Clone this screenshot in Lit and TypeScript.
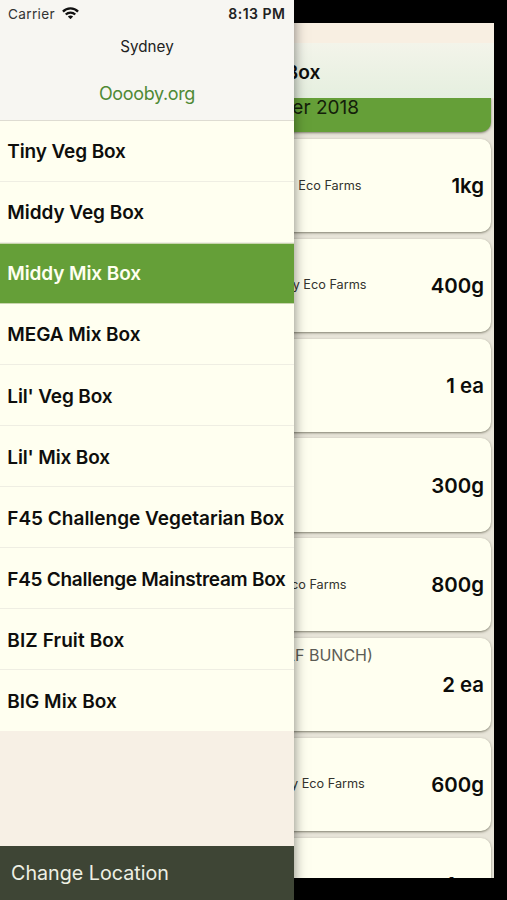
import { LitElement, html, css, nothing } from "lit";
import { customElement, property } from "lit/decorators.js";
import { classMap } from "lit/directives/class-map.js";
import { styleMap } from "lit/directives/style-map.js";

interface BoxItem {
  qty: string;
  farm?: string;
  note?: string;
  /* distance from the card's left edge to the end of the caption */
  end?: number;
}

const BOXES = [
  { name: "Tiny Veg Box", track: -0.12 },
  { name: "Middy Veg Box", track: -0.06 },
  { name: "Middy Mix Box", track: -0.1 },
  { name: "MEGA Mix Box", track: -0.07 },
  { name: "Lil' Veg Box", track: -0.14 },
  { name: "Lil' Mix Box", track: -0.14 },
  { name: "F45 Challenge Vegetarian Box", track: 0 },
  { name: "F45 Challenge Mainstream Box", track: -0.27 },
  { name: "BIZ Fruit Box", track: 0.1 },
  { name: "BIG Mix Box", track: 0 },
];

const ITEMS: BoxItem[] = [
  { qty: "1kg", farm: "Eco Farms", end: 361.5 },
  { qty: "400g", farm: "y Eco Farms", end: 366.5 },
  { qty: "1 ea" },
  { qty: "300g" },
  { qty: "800g", farm: "co Farms", end: 346.5 },
  { qty: "2 ea", note: "LF BUNCH)", end: 372.8 },
  { qty: "600g", farm: "y Eco Farms", end: 364.8 },
  { qty: "1 ea" },
];

@customElement("item-card")
export class ItemCard extends LitElement {
  @property({ attribute: false }) item!: BoxItem;

  static styles = css`
    :host {
      display: block;
      flex: none;
      height: 93.3px;
      margin-bottom: 6.5px;
    }
    .card {
      display: grid;
      grid-template-columns: 1fr auto;
      align-items: center;
      height: 100%;
      box-sizing: border-box;
      padding-right: 7px;
      background: #fffff0;
      border-radius: 0 10px 10px 0;
      box-shadow: 0 1px 2.5px rgba(60, 60, 40, 0.6);
    }
    .caption {
      display: flex;
      justify-content: flex-end;
      white-space: pre;
      font-size: 12.7px;
      line-height: 16px;
      color: #33332e;
    }
    .note {
      align-self: start;
      font-size: 16px;
      line-height: 20px;
      padding-top: 7px;
      color: #5c5c55;
    }
    .qty {
      grid-column: 2;
      margin-top: 1px;
      font-size: 20.4px;
      font-weight: 600;
      line-height: 26px;
      color: #0c0c0a;
    }
  `;

  render() {
    const { qty, farm, note, end } = this.item;
    return html`<div class="card">
      ${farm || note
        ? html`<div
            class=${classMap({ caption: true, note: !!note })}
            style=${styleMap({ width: `${end}px` })}
          ><span>${farm ?? note}</span></div>`
        : nothing}
      <div class="qty">${qty}</div>
    </div>`;
  }
}

@customElement("side-menu")
export class SideMenu extends LitElement {
  static styles = css`
    :host {
      display: flex;
      flex-direction: column;
      background: #f7f0e5;
    }
    .head {
      display: flex;
      flex-direction: column;
      align-items: center;
      height: 119.6px;
      background: #f7f6f2;
      border-bottom: 1px solid #dedcd2;
      box-sizing: content-box;
    }
    .status {
      display: flex;
      align-items: center;
      align-self: stretch;
      height: 27px;
      padding: 0 9px 0 8px;
      font-size: 13.6px;
      color: #333;
    }
    .carrier {
      letter-spacing: 0.35px;
    }
    .wifi {
      width: 17px;
      height: 12.3px;
      margin-left: 7px;
      margin-top: -1px;
    }
    .time {
      margin-left: auto;
      font-weight: 600;
      font-size: 14px;
      letter-spacing: 0.5px;
      margin-right: -0.5px;
      color: #222;
    }
    .city {
      margin-top: 10px;
      font-size: 15.2px;
      line-height: 20px;
      color: #222;
    }
    .site {
      margin-top: 25px;
      font-size: 18px;
      letter-spacing: -0.35px;
      line-height: 24px;
      color: #4f8a35;
    }
    .row {
      display: flex;
      align-items: center;
      height: 61.1px;
      box-sizing: border-box;
      padding: 2px 0 0 7.3px;
      background: #fffff0;
      border-bottom: 1px solid #efeee3;
      font-size: 19px;
      font-weight: 600;
      white-space: nowrap;
      color: #0e0e0c;
    }
    .row:last-child {
      border-bottom-color: #f7f0e5;
    }
    .row.active {
      background: #659f38;
      color: #fffff0;
      border-top: 1px solid #c9d5ae;
      padding-top: 1px;
      border-bottom-color: #c9d5ae;
    }
    .foot {
      display: flex;
      align-items: center;
      height: 54px;
      margin-top: auto;
      padding-left: 11px;
      background: #3e4535;
      font-size: 19.7px;
      color: #eef0e4;
    }
  `;

  render() {
    return html`
      <div class="head">
        <div class="status">
          <span class="carrier">Carrier</span>
          <svg class="wifi" viewBox="0 0 18 13">
            <g fill="none" stroke="#111" stroke-width="2.4">
              <path d="M1 4.9 C5.2 0.3 12.8 0.3 17 4.9" />
              <path d="M4 8 C6.7 5.1 11.3 5.1 14 8" />
            </g>
            <path d="M6.2 10.1 C7.8 8.6 10.2 8.6 11.8 10.1 L9 12.9 Z" fill="#111" />
          </svg>
          <span class="time">8:13 PM</span>
        </div>
        <div class="city">Sydney</div>
        <div class="site">Ooooby.org</div>
      </div>
      <div class="list">
        ${BOXES.map(
          (b) => html`<div class=${classMap({ row: true, active: b.name === "Middy Mix Box" })}>
            <span style=${styleMap({ letterSpacing: `${b.track}px` })}>${b.name}</span>
          </div>`
        )}
      </div>
      <div class="foot">Change Location</div>
    `;
  }
}

@customElement("app-root")
export class AppRoot extends LitElement {
  static styles = css`
    :host {
      display: block;
      position: relative;
      width: 507px;
      height: 900px;
      overflow: hidden;
      box-sizing: border-box;
      padding: 23px 13px 22px 0;
      background: #000;
      font-family: Inter, "Liberation Sans", sans-serif;
    }
    .page {
      display: flex;
      flex-direction: column;
      height: 855px;
      overflow: hidden;
      background: #e8e5d9;
    }
    .top {
      flex: none;
      height: 20px;
      background: #f8efe2;
    }
    .nav {
      flex: none;
      display: flex;
      align-items: center;
      height: 55px;
      box-sizing: border-box;
      padding: 3px 0 0 285.5px;
      background: linear-gradient(#f3f4ea, #e5efdf);
      font-size: 19.2px;
      font-weight: 600;
      color: #0e0e0c;
    }
    .cards {
      flex: 1;
      min-height: 0;
      overflow: hidden;
      padding-right: 3px;
      display: flex;
      flex-direction: column;
    }
    .date {
      flex: none;
      display: flex;
      align-items: flex-start;
      justify-content: flex-end;
      height: 34px;
      margin-bottom: 7px;
      box-sizing: border-box;
      padding-right: 132px;
      background: #659f38;
      border-radius: 0 0 10px 0;
      box-shadow: 0 1px 2.5px rgba(60, 60, 40, 0.6);
      font-size: 19px;
      line-height: 19px;
      color: #14200a;
    }
    .menu {
      position: absolute;
      left: 0;
      top: 0;
      bottom: 0;
      width: 294px;
      box-shadow: 0 0 12px rgba(0, 0, 0, 0.5);
    }
  `;

  render() {
    return html`
      <div class="page">
        <div class="top"></div>
        <div class="nav">Box</div>
        <div class="cards">
          <div class="date">er 2018</div>
          ${ITEMS.map((i) => html`<item-card .item=${i}></item-card>`)}
        </div>
      </div>
      <side-menu class="menu"></side-menu>
    `;
  }
}
